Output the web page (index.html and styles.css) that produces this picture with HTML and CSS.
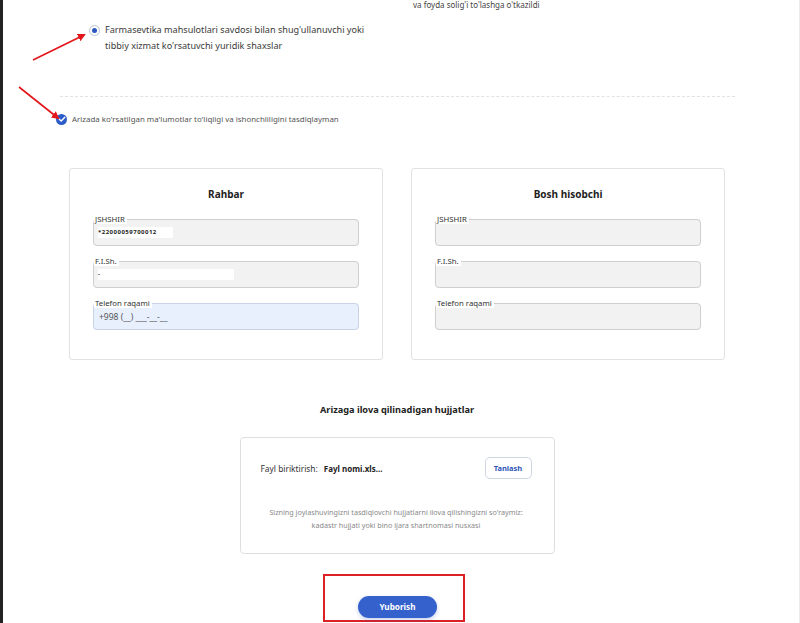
FILE: index.html
```html
<!DOCTYPE html>
<html lang="uz">
<head>
  <meta charset="UTF-8">
  <meta name="viewport" content="width=device-width, initial-scale=1.0">
  <title>Ariza</title>
  <link rel="stylesheet" href="styles.css">
</head>
<body>
  <!-- red annotation arrows -->
  <svg class="marks" width="120" height="130" viewBox="0 0 120 130">
    <defs>
      <marker id="tip" markerWidth="8" markerHeight="8" refX="6" refY="4" orient="auto" markerUnits="userSpaceOnUse">
        <path d="M0,0 L8,4 L0,8 Z" fill="#e3161b"/>
      </marker>
    </defs>
    <line x1="33" y1="60" x2="84" y2="35" stroke="#e3161b" stroke-width="1.6" marker-end="url(#tip)"/>
    <line x1="19" y1="87" x2="58" y2="118" stroke="#e3161b" stroke-width="1.6" marker-end="url(#tip)"/>
  </svg>

  <div class="intro">
    <p class="cut-text">va foyda solig'i to'lashga o'tkazildi</p>

    <label class="radio-opt">
      <span class="radio"><span class="dot"></span></span>
      <span class="radio-text">Farmasevtika mahsulotlari savdosi bilan shug'ullanuvchi yoki<br>tibbiy xizmat ko'rsatuvchi yuridik shaxslar</span>
    </label>

    <hr class="dashed">

    <label class="agree">
      <span class="check">
        <svg width="8" height="8" viewBox="0 0 8 8"><path d="M1.3 4.2 L3.2 6 L6.8 2.2" fill="none" stroke="#fff" stroke-width="1.4" stroke-linecap="round" stroke-linejoin="round"/></svg>
      </span>
      Arizada ko'rsatilgan ma'lumotlar to'liqligi va ishonchliligini tasdiqlayman
    </label>
  </div>

  <div class="form">
    <div class="cards">
      <section class="card">
        <h3>Rahbar</h3>
        <fieldset class="field">
          <legend>JSHSHIR</legend>
          <div class="val"><span class="mask short">*22000059700012</span></div>
        </fieldset>
        <fieldset class="field">
          <legend>F.I.Sh.</legend>
          <div class="val"><span class="mask long">-</span></div>
        </fieldset>
        <fieldset class="field active">
          <legend>Telefon raqami</legend>
          <div class="val phone">+998 (__) ___-__-__</div>
        </fieldset>
      </section>

      <section class="card">
        <h3>Bosh hisobchi</h3>
        <fieldset class="field">
          <legend>JSHSHIR</legend>
          <div class="val"></div>
        </fieldset>
        <fieldset class="field">
          <legend>F.I.Sh.</legend>
          <div class="val"></div>
        </fieldset>
        <fieldset class="field">
          <legend>Telefon raqami</legend>
          <div class="val"></div>
        </fieldset>
      </section>
    </div>

    <h3 class="docs-title">Arizaga ilova qilinadigan hujjatlar</h3>

    <div class="upload">
      <div class="upload-row">
        <span class="file-label">Fayl biriktirish:</span>
        <span class="file-name">Fayl nomi.xls...</span>
        <button class="pick">Tanlash</button>
      </div>
      <p class="hint">Sizning joylashuvingizni tasdiqlovchi hujjatlarni ilova qilishingizni so'raymiz:<br>kadastr hujjati yoki bino ijara shartnomasi nusxasi</p>
    </div>

    <div class="submit-box">
      <button class="submit">Yuborish</button>
    </div>
  </div>
</body>
</html>
```

FILE: styles.css
```css
body {
  margin: 0;
  height: 623px;
  overflow: hidden;
  font-family: 'Noto Sans', 'Open Sans', sans-serif;
  color: #333;
  background: #fff;
  border-left: 3px solid #232323;
  border-right: 1px solid #ececec;
  position: relative;
}

.marks {
  position: absolute;
  left: -3px;
  top: 0;
}

/* top part */
.intro {
  display: flex;
  flex-direction: column;
}

.cut-text {
  margin: -1px 0 0 410px;
  font-size: 8px;
  line-height: 12px;
  color: #444;
}

.radio-opt {
  display: flex;
  gap: 5px;
  margin: 11px 0 0 86px;
  font-size: 9.1px;
  line-height: 16px;
  color: #3a3a3a;
}

.radio {
  flex: none;
  width: 9px;
  height: 9px;
  margin-top: 3px;
  border: 1px solid #b9c3d8;
  border-radius: 50%;
  display: flex;
  align-items: center;
  justify-content: center;
}

.dot {
  width: 5px;
  height: 5px;
  border-radius: 50%;
  background: #2c58c4;
}

.dashed {
  margin: 42px 0 0 57px;
  width: 675px;
  border: none;
  border-top: 1px dashed #e2e2e2;
}

.agree {
  display: flex;
  align-items: center;
  gap: 5px;
  margin: 16px 0 0 53px;
  font-size: 7.9px;
  line-height: 12px;
  color: #555;
}

.check {
  width: 11px;
  height: 11px;
  border-radius: 50%;
  background: #2c5cc8;
  display: flex;
  align-items: center;
  justify-content: center;
}

/* form */
.form {
  width: 656px;
  margin: 43px 0 0 66px;
}

.cards {
  display: grid;
  grid-template-columns: 314px 314px;
  gap: 28px;
}

.card {
  border: 1px solid #e2e2e2;
  border-radius: 3px;
  padding: 18px 23px 29px;
}

.card h3 {
  margin: 0 0 13px;
  text-align: center;
  font-size: 10px;
  line-height: 14px;
  font-weight: 700;
  color: #222;
}

.field {
  margin: 0 0 10px;
  padding: 0 4px 4px;
  min-width: 0;
  border: 1px solid #cfcfcf;
  border-radius: 4px;
  background: #f2f2f2;
}

.field:last-child {
  margin-bottom: 0;
}

.field legend {
  padding: 0 2px 0 1px;
  margin-left: -4px;
  font-size: 7.8px;
  line-height: 10px;
  color: #333;
  background: #fff;
}

.field.active {
  background: #e8f0fe;
  border-color: #c9d3e6;
}

.val {
  height: 17px;
  display: flex;
  align-items: center;
}

.mask {
  background: #fff;
  height: 11px;
  font-size: 6px;
  line-height: 11px;
  font-weight: 700;
  color: #222;
  letter-spacing: 0.5px;
}

.mask.short {
  width: 75px;
}

.mask.long {
  width: 136px;
}

.phone {
  font-size: 8.5px;
  color: #555;
  padding-left: 1px;
}

.docs-title {
  margin: 43px 0 20px;
  text-align: center;
  font-size: 9.2px;
  line-height: 14px;
  font-weight: 700;
  color: #222;
}

.upload {
  width: 271px;
  margin: 0 auto;
  border: 1px solid #dedede;
  border-radius: 4px;
  padding: 19px 22px 21px 20px;
}

.upload-row {
  display: flex;
  align-items: center;
  font-size: 8.4px;
  color: #333;
}

.file-name {
  margin-left: 6px;
  font-weight: 700;
  font-size: 8px;
  color: #222;
}

.pick {
  margin-left: auto;
  width: 47px;
  height: 22px;
  border: 1px solid #cfd5e2;
  border-radius: 5px;
  background: #fff;
  font-family: inherit;
  font-size: 7.5px;
  font-weight: 700;
  color: #2d55b8;
  cursor: pointer;
}

.hint {
  margin: 27px 0 0;
  text-align: center;
  font-size: 7.2px;
  line-height: 13px;
  color: #8a8a8a;
}

.submit-box {
  width: 105px;
  margin: 20px 0 0 254px;
  border: 2px solid #dd1f26;
  padding: 17px 0 2px 33px;
}

.submit {
  width: 79px;
  height: 22px;
  border: none;
  border-radius: 11px;
  background: #3461cc;
  color: #fff;
  font-family: inherit;
  font-size: 8.2px;
  font-weight: 700;
  box-shadow: 0 2px 4px rgba(40, 80, 180, 0.25);
  cursor: pointer;
}
```
